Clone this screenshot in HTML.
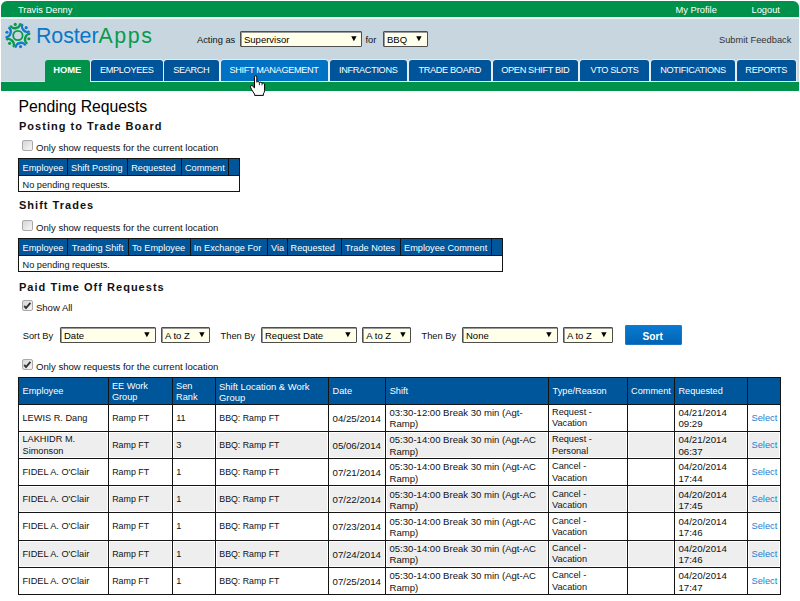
<!DOCTYPE html>
<html><head><meta charset="utf-8">
<style>
html,body{margin:0;padding:0;background:#fff;}
body{width:800px;height:601px;overflow:hidden;position:relative;font-family:"Liberation Sans",sans-serif;color:#000;}
.a{position:absolute;white-space:nowrap;}
.b{position:absolute;}
.wt{color:#fff;font-size:9.3px;}
.tab{position:absolute;top:60px;height:21px;background:#00559a;border-radius:3px 3px 0 0;box-shadow:0 0 0 1px #e6ecf2;color:#fff;font-size:9.2px;text-align:center;line-height:20.5px;letter-spacing:-0.35px;}
.tab.home{background:#00924a;height:22px;font-weight:bold;font-size:9.4px;letter-spacing:0;box-shadow:none;}
.tab.hov{background:#0072c6;}
.sel{position:absolute;height:13.7px;border:1px solid #4e4e4e;background:#ffffea;box-shadow:inset 1px 1px 0 #9a9a9a;font-size:9.5px;line-height:15.5px;border-radius:1px;}
.sel span{position:absolute;left:3px;top:0;}
.sel svg{position:absolute;top:4px;}
.h1{font-size:15.75px;}
.h2{font-size:11px;font-weight:bold;letter-spacing:1.02px;color:#111;}
.t{font-size:9.3px;}
.cb{position:absolute;width:9px;height:9px;border:1px solid #a9a9a9;border-radius:2px;background:linear-gradient(135deg,#d6d6d6,#f6f6f6);}
.th{color:#fff;font-size:9.2px;}
.td{font-size:9.2px;color:#111;}
.lnk{color:#1a7fd4;font-size:9.3px;}
</style></head><body>
<div class="b" style="left:1px;top:1px;width:798px;height:16px;background:#00924a;border-radius:6px 6px 0 0;"></div>
<div class="b" style="left:1px;top:17px;width:798px;height:2px;background:#eeeef4;"></div>
<div class="b" style="left:1px;top:19px;width:797.5px;height:62px;background:#c8d6e0;"></div>
<div class="b" style="left:1px;top:81px;width:797.5px;height:1px;background:#dcdcec;"></div>
<div class="b" style="left:1px;top:82px;width:798px;height:9px;background:#00924a;"></div>
<div class="a wt" style="left:18px;top:5px;">Travis Denny</div>
<div class="a wt" style="left:675.5px;top:5.4px;">My Profile</div>
<div class="a wt" style="left:751.5px;top:5.4px;">Logout</div>
<svg class="a" style="left:0;top:16px;" width="36" height="40" viewBox="0 16 36 40"><circle cx="17.9" cy="35.5" r="4.7" fill="none" stroke="#079a4b" stroke-width="1.8"/><circle cx="15.24" cy="24.41" r="1.6" fill="#079a4b"/><path d="M20.00 23.27A4.9 3.7 -13.5 0 1 10.47 25.56" fill="none" stroke="#079a4b" stroke-width="2.4"/><circle cx="26.17" cy="27.65" r="1.6" fill="#1479cc"/><path d="M29.54 31.21A4.9 3.7 46.5 0 1 22.80 24.10" fill="none" stroke="#1479cc" stroke-width="2.4"/><circle cx="28.83" cy="38.74" r="1.6" fill="#079a4b"/><path d="M27.44 43.44A4.9 3.7 106.5 0 1 30.22 34.04" fill="none" stroke="#079a4b" stroke-width="2.4"/><circle cx="20.56" cy="46.59" r="1.6" fill="#1479cc"/><path d="M15.80 47.73A4.9 3.7 166.5 0 1 25.33 45.44" fill="none" stroke="#1479cc" stroke-width="2.4"/><circle cx="9.63" cy="43.35" r="1.6" fill="#079a4b"/><path d="M6.26 39.79A4.9 3.7 -133.5 0 1 13.00 46.90" fill="none" stroke="#079a4b" stroke-width="2.4"/><circle cx="6.97" cy="32.26" r="1.6" fill="#1479cc"/><path d="M8.36 27.56A4.9 3.7 -73.5 0 1 5.58 36.96" fill="none" stroke="#1479cc" stroke-width="2.4"/></svg>
<div class="a a" style="left:36px;top:24px;font-size:21.4px;color:#0b77c9;letter-spacing:-0.1px;">Roster<span style="color:#079a4e;letter-spacing:1.6px">Apps</span></div>
<div class="a t" style="left:197px;top:35px;color:#111;">Acting as</div>
<div class="sel" style="left:240px;top:31px;width:120px;"><span>Supervisor</span><svg width="6" height="6" viewBox="0 0 6 6" style="left:109.5px"><path d="M0.2 0.3H5.6L2.9 5.2Z" fill="#000"/></svg></div>
<div class="a t" style="left:365.5px;top:35px;color:#111;">for</div>
<div class="sel" style="left:383px;top:31px;width:43px;"><span>BBQ</span><svg width="6" height="6" viewBox="0 0 6 6" style="left:32.3px"><path d="M0.2 0.3H5.6L2.9 5.2Z" fill="#000"/></svg></div>
<div class="a t" style="left:719px;top:34.5px;color:#333;">Submit Feedback</div>
<div class="tab home" style="left:45px;width:44.5px;">HOME</div>
<div class="tab " style="left:91px;width:71.5px;">EMPLOYEES</div>
<div class="tab " style="left:164px;width:54.5px;">SEARCH</div>
<div class="tab hov" style="left:220.5px;width:107.0px;">SHIFT MANAGEMENT</div>
<div class="tab " style="left:330px;width:76.5px;">INFRACTIONS</div>
<div class="tab " style="left:408.5px;width:82.5px;">TRADE BOARD</div>
<div class="tab " style="left:493px;width:84.5px;">OPEN SHIFT BID</div>
<div class="tab " style="left:580px;width:69px;">VTO SLOTS</div>
<div class="tab " style="left:651px;width:84px;">NOTIFICATIONS</div>
<div class="tab " style="left:737px;width:58.5px;">REPORTS</div>
<div class="a h1" style="left:18.5px;top:97.5px;">Pending Requests</div>
<div class="a h2" style="left:19px;top:119.7px;">Posting to Trade Board</div>
<div class="cb" style="left:22px;top:140px;"></div>
<div class="a t" style="left:36px;top:142px;font-size:9.6px;color:#111;">Only show requests for the current location</div>
<div class="b" style="left:18.5px;top:158.5px;width:221.0px;height:17.0px;background:#00569a;"></div>
<div class="b" style="left:18.5px;top:191.5px;width:221.0px;height:0.0px;background:#141414;"></div>
<div class="b" style="left:18.0px;top:158.0px;width:220.0px;height:32.0px;border:1px solid #141414;"></div>
<div class="b" style="left:18.5px;top:175.0px;width:221.0px;height:1.0px;background:#141414;"></div>
<div class="b" style="left:67.1px;top:158.5px;width:1.0px;height:17.0px;background:#141414;"></div>
<div class="b" style="left:127.0px;top:158.5px;width:1.0px;height:17.0px;background:#141414;"></div>
<div class="b" style="left:181.4px;top:158.5px;width:1.0px;height:17.0px;background:#141414;"></div>
<div class="b" style="left:228.3px;top:158.5px;width:1.0px;height:17.0px;background:#141414;"></div>
<div class="a th" style="left:22.5px;top:163.1px;">Employee</div>
<div class="a th" style="left:71.1px;top:163.1px;">Shift Posting</div>
<div class="a th" style="left:131.2px;top:163.1px;">Requested</div>
<div class="a th" style="left:184.9px;top:163.1px;">Comment</div>
<div class="a td" style="left:22.5px;top:180.1px;">No pending requests.</div>
<div class="a h2" style="left:19px;top:199.3px;">Shift Trades</div>
<div class="cb" style="left:22px;top:220px;"></div>
<div class="a t" style="left:36px;top:222px;font-size:9.6px;color:#111;">Only show requests for the current location</div>
<div class="b" style="left:18.5px;top:238.5px;width:483.5px;height:17.0px;background:#00569a;"></div>
<div class="b" style="left:18.5px;top:271.5px;width:483.5px;height:0.0px;background:#141414;"></div>
<div class="b" style="left:18.0px;top:238.0px;width:482.5px;height:32.0px;border:1px solid #141414;"></div>
<div class="b" style="left:18.5px;top:255.0px;width:483.5px;height:1.0px;background:#141414;"></div>
<div class="b" style="left:66.5px;top:238.5px;width:1.0px;height:17.0px;background:#141414;"></div>
<div class="b" style="left:127.69999999999999px;top:238.5px;width:1.0px;height:17.0px;background:#141414;"></div>
<div class="b" style="left:189.7px;top:238.5px;width:1.0px;height:17.0px;background:#141414;"></div>
<div class="b" style="left:267.0px;top:238.5px;width:1.0px;height:17.0px;background:#141414;"></div>
<div class="b" style="left:286.8px;top:238.5px;width:1.0px;height:17.0px;background:#141414;"></div>
<div class="b" style="left:340.9px;top:238.5px;width:1.0px;height:17.0px;background:#141414;"></div>
<div class="b" style="left:400.1px;top:238.5px;width:1.0px;height:17.0px;background:#141414;"></div>
<div class="b" style="left:490.8px;top:238.5px;width:1.0px;height:17.0px;background:#141414;"></div>
<div class="a th" style="left:22.5px;top:243.1px;">Employee</div>
<div class="a th" style="left:71.7px;top:243.1px;">Trading Shift</div>
<div class="a th" style="left:132px;top:243.1px;">To Employee</div>
<div class="a th" style="left:193.8px;top:243.1px;">In Exchange For</div>
<div class="a th" style="left:271px;top:243.1px;">Via</div>
<div class="a th" style="left:290.5px;top:243.1px;">Requested</div>
<div class="a th" style="left:345px;top:243.1px;">Trade Notes</div>
<div class="a th" style="left:404px;top:243.1px;">Employee Comment</div>
<div class="a td" style="left:22.5px;top:260.1px;">No pending requests.</div>
<div class="a h2" style="left:19px;top:280.5px;">Paid Time Off Requests</div>
<div class="cb" style="left:22px;top:300px;"><svg class="a" style="left:-1px;top:-1px" width="11" height="11" viewBox="0 0 11 11"><path d="M2.2 5.9L4 8L8.4 2.8" fill="none" stroke="#333" stroke-width="1.9"/></svg></div>
<div class="a t" style="left:36px;top:302px;font-size:9.5px;color:#111;">Show All</div>
<div class="a t" style="left:22.7px;top:330.5px;color:#111;">Sort By</div>
<div class="sel" style="left:60px;top:327px;width:93.5px;height:13.5px;line-height:15.5px;font-size:9.5px;"><span>Date</span><svg width="6" height="6" viewBox="0 0 6 6" style="left:83.1px"><path d="M0.2 0.3H5.6L2.9 5.2Z" fill="#000"/></svg></div>
<div class="sel" style="left:161px;top:327px;width:47px;height:13.5px;line-height:15.5px;font-size:9.5px;"><span>A to Z</span><svg width="6" height="6" viewBox="0 0 6 6" style="left:36.6px"><path d="M0.2 0.3H5.6L2.9 5.2Z" fill="#000"/></svg></div>
<div class="a t" style="left:220.6px;top:330.5px;color:#111;">Then By</div>
<div class="sel" style="left:261px;top:327px;width:93.5px;height:13.5px;line-height:15.5px;font-size:9.5px;"><span>Request Date</span><svg width="6" height="6" viewBox="0 0 6 6" style="left:83.1px"><path d="M0.2 0.3H5.6L2.9 5.2Z" fill="#000"/></svg></div>
<div class="sel" style="left:362.3px;top:327px;width:46.69999999999999px;height:13.5px;line-height:15.5px;font-size:9.5px;"><span>A to Z</span><svg width="6" height="6" viewBox="0 0 6 6" style="left:36.29999999999999px"><path d="M0.2 0.3H5.6L2.9 5.2Z" fill="#000"/></svg></div>
<div class="a t" style="left:421.5px;top:330.5px;color:#111;">Then By</div>
<div class="sel" style="left:462px;top:327px;width:93.5px;height:13.5px;line-height:15.5px;font-size:9.5px;"><span>None</span><svg width="6" height="6" viewBox="0 0 6 6" style="left:83.1px"><path d="M0.2 0.3H5.6L2.9 5.2Z" fill="#000"/></svg></div>
<div class="sel" style="left:563px;top:327px;width:47.5px;height:13.5px;line-height:15.5px;font-size:9.5px;"><span>A to Z</span><svg width="6" height="6" viewBox="0 0 6 6" style="left:37.1px"><path d="M0.2 0.3H5.6L2.9 5.2Z" fill="#000"/></svg></div>
<div class="b" style="left:624.5px;top:325px;width:57.5px;height:19.8px;border-radius:2px;background:linear-gradient(#0a7bd2,#0063b4);box-shadow:inset 0 0 0 1px #1b78c8;"></div>
<div class="a a" style="left:642.5px;top:330.5px;color:#fff;font-weight:bold;font-size:10.2px;">Sort</div>
<div class="cb" style="left:22px;top:359px;"><svg class="a" style="left:-1px;top:-1px" width="11" height="11" viewBox="0 0 11 11"><path d="M2.2 5.9L4 8L8.4 2.8" fill="none" stroke="#333" stroke-width="1.9"/></svg></div>
<div class="a t" style="left:36px;top:361px;font-size:9.6px;color:#111;">Only show requests for the current location</div>
<div class="b" style="left:18.5px;top:377px;width:762.25px;height:27px;background:#00569a;"></div>
<div class="b" style="left:20.0px;top:432.71px;width:86.9px;height:24.22px;background:#eeeeee;"></div>
<div class="b" style="left:109.9px;top:432.71px;width:61.0px;height:24.22px;background:#eeeeee;"></div>
<div class="b" style="left:173.9px;top:432.71px;width:40.1px;height:24.22px;background:#eeeeee;"></div>
<div class="b" style="left:217.0px;top:432.71px;width:110.1px;height:24.22px;background:#eeeeee;"></div>
<div class="b" style="left:330.1px;top:432.71px;width:54.2px;height:24.22px;background:#eeeeee;"></div>
<div class="b" style="left:387.3px;top:432.71px;width:159.6px;height:24.22px;background:#eeeeee;"></div>
<div class="b" style="left:549.9px;top:432.71px;width:76.1px;height:24.22px;background:#eeeeee;"></div>
<div class="b" style="left:629.0px;top:432.71px;width:44.4px;height:24.22px;background:#eeeeee;"></div>
<div class="b" style="left:676.4px;top:432.71px;width:69.6px;height:24.22px;background:#eeeeee;"></div>
<div class="b" style="left:749.0px;top:432.71px;width:30.25px;height:24.22px;background:#eeeeee;"></div>
<div class="b" style="left:20.0px;top:487.14px;width:86.9px;height:24.22px;background:#eeeeee;"></div>
<div class="b" style="left:109.9px;top:487.14px;width:61.0px;height:24.22px;background:#eeeeee;"></div>
<div class="b" style="left:173.9px;top:487.14px;width:40.1px;height:24.22px;background:#eeeeee;"></div>
<div class="b" style="left:217.0px;top:487.14px;width:110.1px;height:24.22px;background:#eeeeee;"></div>
<div class="b" style="left:330.1px;top:487.14px;width:54.2px;height:24.22px;background:#eeeeee;"></div>
<div class="b" style="left:387.3px;top:487.14px;width:159.6px;height:24.22px;background:#eeeeee;"></div>
<div class="b" style="left:549.9px;top:487.14px;width:76.1px;height:24.22px;background:#eeeeee;"></div>
<div class="b" style="left:629.0px;top:487.14px;width:44.4px;height:24.22px;background:#eeeeee;"></div>
<div class="b" style="left:676.4px;top:487.14px;width:69.6px;height:24.22px;background:#eeeeee;"></div>
<div class="b" style="left:749.0px;top:487.14px;width:30.25px;height:24.22px;background:#eeeeee;"></div>
<div class="b" style="left:20.0px;top:541.57px;width:86.9px;height:24.22px;background:#eeeeee;"></div>
<div class="b" style="left:109.9px;top:541.57px;width:61.0px;height:24.22px;background:#eeeeee;"></div>
<div class="b" style="left:173.9px;top:541.57px;width:40.1px;height:24.22px;background:#eeeeee;"></div>
<div class="b" style="left:217.0px;top:541.57px;width:110.1px;height:24.22px;background:#eeeeee;"></div>
<div class="b" style="left:330.1px;top:541.57px;width:54.2px;height:24.22px;background:#eeeeee;"></div>
<div class="b" style="left:387.3px;top:541.57px;width:159.6px;height:24.22px;background:#eeeeee;"></div>
<div class="b" style="left:549.9px;top:541.57px;width:76.1px;height:24.22px;background:#eeeeee;"></div>
<div class="b" style="left:629.0px;top:541.57px;width:44.4px;height:24.22px;background:#eeeeee;"></div>
<div class="b" style="left:676.4px;top:541.57px;width:69.6px;height:24.22px;background:#eeeeee;"></div>
<div class="b" style="left:749.0px;top:541.57px;width:30.25px;height:24.22px;background:#eeeeee;"></div>
<div class="b" style="left:18.0px;top:376.5px;width:761.25px;height:216.5px;border:1px solid #141414;"></div>
<div class="b" style="left:107.9px;top:377px;width:1.0px;height:217.5px;background:#141414;"></div>
<div class="b" style="left:171.9px;top:377px;width:1.0px;height:217.5px;background:#141414;"></div>
<div class="b" style="left:215.0px;top:377px;width:1.0px;height:217.5px;background:#141414;"></div>
<div class="b" style="left:328.1px;top:377px;width:1.0px;height:217.5px;background:#141414;"></div>
<div class="b" style="left:385.3px;top:377px;width:1.0px;height:217.5px;background:#141414;"></div>
<div class="b" style="left:547.9px;top:377px;width:1.0px;height:217.5px;background:#141414;"></div>
<div class="b" style="left:627.0px;top:377px;width:1.0px;height:217.5px;background:#141414;"></div>
<div class="b" style="left:674.4px;top:377px;width:1.0px;height:217.5px;background:#141414;"></div>
<div class="b" style="left:747.0px;top:377px;width:1.0px;height:217.5px;background:#141414;"></div>
<div class="b" style="left:18.5px;top:403.5px;width:762.25px;height:1.0px;background:#141414;"></div>
<div class="b" style="left:18.5px;top:430.71px;width:762.25px;height:1.0px;background:#141414;"></div>
<div class="b" style="left:18.5px;top:457.93px;width:762.25px;height:1.0px;background:#141414;"></div>
<div class="b" style="left:18.5px;top:485.14px;width:762.25px;height:1.0px;background:#141414;"></div>
<div class="b" style="left:18.5px;top:512.36px;width:762.25px;height:1.0px;background:#141414;"></div>
<div class="b" style="left:18.5px;top:539.57px;width:762.25px;height:1.0px;background:#141414;"></div>
<div class="b" style="left:18.5px;top:566.79px;width:762.25px;height:1.0px;background:#141414;"></div>
<div class="b" style="left:18.5px;top:594.0px;width:762.25px;height:1.0px;background:#141414;"></div>
<div class="a th" style="left:22.5px;top:386.3px;">Employee</div>
<div class="a th" style="left:111.9px;top:381.0px;">EE Work</div>
<div class="a th" style="left:111.9px;top:391.9px;">Group</div>
<div class="a th" style="left:176.1px;top:381.0px;">Sen</div>
<div class="a th" style="left:176.1px;top:391.9px;">Rank</div>
<div class="a th" style="left:219px;top:381.0px;font-size:9.45px;">Shift Location &amp; Work</div>
<div class="a th" style="left:219px;top:391.9px;font-size:9.45px;">Group</div>
<div class="a th" style="left:332.6px;top:386.3px;">Date</div>
<div class="a th" style="left:389.7px;top:386.3px;">Shift</div>
<div class="a th" style="left:552.6px;top:386.3px;">Type/Reason</div>
<div class="a th" style="left:631px;top:386.3px;">Comment</div>
<div class="a th" style="left:678.4px;top:386.3px;">Requested</div>
<div class="a td" style="left:22.5px;top:412.59999999999997px;">LEWIS R. Dang</div>
<div class="a td" style="left:112.2px;top:412.59999999999997px;font-size:8.9px;">Ramp FT</div>
<div class="a td" style="left:176.2px;top:412.59999999999997px;">11</div>
<div class="a td" style="left:219.3px;top:412.59999999999997px;font-size:8.8px;">BBQ: Ramp FT</div>
<div class="a td" style="left:332.5px;top:412.59999999999997px;font-size:9.7px;">04/25/2014</div>
<div class="a td" style="left:389.5px;top:406.9px;font-size:9.55px;">03:30-12:00 Break 30 min (Agt-</div>
<div class="a td" style="left:389.5px;top:418.4px;font-size:9.55px;">Ramp)</div>
<div class="a td" style="left:552px;top:406.9px;">Request -</div>
<div class="a td" style="left:552px;top:418.4px;">Vacation</div>
<div class="a td" style="left:678.4px;top:406.9px;font-size:9.7px;">04/21/2014</div>
<div class="a td" style="left:678.4px;top:418.4px;font-size:9.7px;">09:29</div>
<div class="a lnk" style="left:751.5px;top:412.59999999999997px;">Select</div>
<div class="a td" style="left:22.5px;top:434.1142857142857px;">LAKHIDR M.</div>
<div class="a td" style="left:22.5px;top:445.6142857142857px;">Simonson</div>
<div class="a td" style="left:112.2px;top:439.8142857142857px;font-size:8.9px;">Ramp FT</div>
<div class="a td" style="left:176.2px;top:439.8142857142857px;">3</div>
<div class="a td" style="left:219.3px;top:439.8142857142857px;font-size:8.8px;">BBQ: Ramp FT</div>
<div class="a td" style="left:332.5px;top:439.8142857142857px;font-size:9.7px;">05/06/2014</div>
<div class="a td" style="left:389.5px;top:434.1142857142857px;font-size:9.55px;">05:30-14:00 Break 30 min (Agt-AC</div>
<div class="a td" style="left:389.5px;top:445.6142857142857px;font-size:9.55px;">Ramp)</div>
<div class="a td" style="left:552px;top:434.1142857142857px;">Request -</div>
<div class="a td" style="left:552px;top:445.6142857142857px;">Personal</div>
<div class="a td" style="left:678.4px;top:434.1142857142857px;font-size:9.7px;">04/21/2014</div>
<div class="a td" style="left:678.4px;top:445.6142857142857px;font-size:9.7px;">06:37</div>
<div class="a lnk" style="left:751.5px;top:439.8142857142857px;">Select</div>
<div class="a td" style="left:22.5px;top:467.0285714285714px;">FIDEL A. O'Clair</div>
<div class="a td" style="left:112.2px;top:467.0285714285714px;font-size:8.9px;">Ramp FT</div>
<div class="a td" style="left:176.2px;top:467.0285714285714px;">1</div>
<div class="a td" style="left:219.3px;top:467.0285714285714px;font-size:8.8px;">BBQ: Ramp FT</div>
<div class="a td" style="left:332.5px;top:467.0285714285714px;font-size:9.7px;">07/21/2014</div>
<div class="a td" style="left:389.5px;top:461.3285714285714px;font-size:9.55px;">05:30-14:00 Break 30 min (Agt-AC</div>
<div class="a td" style="left:389.5px;top:472.8285714285714px;font-size:9.55px;">Ramp)</div>
<div class="a td" style="left:552px;top:461.3285714285714px;">Cancel -</div>
<div class="a td" style="left:552px;top:472.8285714285714px;">Vacation</div>
<div class="a td" style="left:678.4px;top:461.3285714285714px;font-size:9.7px;">04/20/2014</div>
<div class="a td" style="left:678.4px;top:472.8285714285714px;font-size:9.7px;">17:44</div>
<div class="a lnk" style="left:751.5px;top:467.0285714285714px;">Select</div>
<div class="a td" style="left:22.5px;top:494.2428571428571px;">FIDEL A. O'Clair</div>
<div class="a td" style="left:112.2px;top:494.2428571428571px;font-size:8.9px;">Ramp FT</div>
<div class="a td" style="left:176.2px;top:494.2428571428571px;">1</div>
<div class="a td" style="left:219.3px;top:494.2428571428571px;font-size:8.8px;">BBQ: Ramp FT</div>
<div class="a td" style="left:332.5px;top:494.2428571428571px;font-size:9.7px;">07/22/2014</div>
<div class="a td" style="left:389.5px;top:488.5428571428571px;font-size:9.55px;">05:30-14:00 Break 30 min (Agt-AC</div>
<div class="a td" style="left:389.5px;top:500.0428571428571px;font-size:9.55px;">Ramp)</div>
<div class="a td" style="left:552px;top:488.5428571428571px;">Cancel -</div>
<div class="a td" style="left:552px;top:500.0428571428571px;">Vacation</div>
<div class="a td" style="left:678.4px;top:488.5428571428571px;font-size:9.7px;">04/20/2014</div>
<div class="a td" style="left:678.4px;top:500.0428571428571px;font-size:9.7px;">17:45</div>
<div class="a lnk" style="left:751.5px;top:494.2428571428571px;">Select</div>
<div class="a td" style="left:22.5px;top:521.4571428571429px;">FIDEL A. O'Clair</div>
<div class="a td" style="left:112.2px;top:521.4571428571429px;font-size:8.9px;">Ramp FT</div>
<div class="a td" style="left:176.2px;top:521.4571428571429px;">1</div>
<div class="a td" style="left:219.3px;top:521.4571428571429px;font-size:8.8px;">BBQ: Ramp FT</div>
<div class="a td" style="left:332.5px;top:521.4571428571429px;font-size:9.7px;">07/23/2014</div>
<div class="a td" style="left:389.5px;top:515.7571428571429px;font-size:9.55px;">05:30-14:00 Break 30 min (Agt-AC</div>
<div class="a td" style="left:389.5px;top:527.2571428571429px;font-size:9.55px;">Ramp)</div>
<div class="a td" style="left:552px;top:515.7571428571429px;">Cancel -</div>
<div class="a td" style="left:552px;top:527.2571428571429px;">Vacation</div>
<div class="a td" style="left:678.4px;top:515.7571428571429px;font-size:9.7px;">04/20/2014</div>
<div class="a td" style="left:678.4px;top:527.2571428571429px;font-size:9.7px;">17:46</div>
<div class="a lnk" style="left:751.5px;top:521.4571428571429px;">Select</div>
<div class="a td" style="left:22.5px;top:548.6714285714286px;">FIDEL A. O'Clair</div>
<div class="a td" style="left:112.2px;top:548.6714285714286px;font-size:8.9px;">Ramp FT</div>
<div class="a td" style="left:176.2px;top:548.6714285714286px;">1</div>
<div class="a td" style="left:219.3px;top:548.6714285714286px;font-size:8.8px;">BBQ: Ramp FT</div>
<div class="a td" style="left:332.5px;top:548.6714285714286px;font-size:9.7px;">07/24/2014</div>
<div class="a td" style="left:389.5px;top:542.9714285714285px;font-size:9.55px;">05:30-14:00 Break 30 min (Agt-AC</div>
<div class="a td" style="left:389.5px;top:554.4714285714285px;font-size:9.55px;">Ramp)</div>
<div class="a td" style="left:552px;top:542.9714285714285px;">Cancel -</div>
<div class="a td" style="left:552px;top:554.4714285714285px;">Vacation</div>
<div class="a td" style="left:678.4px;top:542.9714285714285px;font-size:9.7px;">04/20/2014</div>
<div class="a td" style="left:678.4px;top:554.4714285714285px;font-size:9.7px;">17:46</div>
<div class="a lnk" style="left:751.5px;top:548.6714285714286px;">Select</div>
<div class="a td" style="left:22.5px;top:575.8857142857142px;">FIDEL A. O'Clair</div>
<div class="a td" style="left:112.2px;top:575.8857142857142px;font-size:8.9px;">Ramp FT</div>
<div class="a td" style="left:176.2px;top:575.8857142857142px;">1</div>
<div class="a td" style="left:219.3px;top:575.8857142857142px;font-size:8.8px;">BBQ: Ramp FT</div>
<div class="a td" style="left:332.5px;top:575.8857142857142px;font-size:9.7px;">07/25/2014</div>
<div class="a td" style="left:389.5px;top:570.1857142857142px;font-size:9.55px;">05:30-14:00 Break 30 min (Agt-AC</div>
<div class="a td" style="left:389.5px;top:581.6857142857142px;font-size:9.55px;">Ramp)</div>
<div class="a td" style="left:552px;top:570.1857142857142px;">Cancel -</div>
<div class="a td" style="left:552px;top:581.6857142857142px;">Vacation</div>
<div class="a td" style="left:678.4px;top:570.1857142857142px;font-size:9.7px;">04/20/2014</div>
<div class="a td" style="left:678.4px;top:581.6857142857142px;font-size:9.7px;">17:47</div>
<div class="a lnk" style="left:751.5px;top:575.8857142857142px;">Select</div>
<svg class="a" style="left:248px;top:74px;" width="20" height="24" viewBox="248 74 20 24"><path d="M254.5 77.2Q254.5 75.7 255.65 75.7Q256.8 75.7 256.8 77.2L256.8 82.2Q257.2 81.5 258.1 81.5Q259.3 81.6 259.4 82.7Q259.8 82.1 260.8 82.2Q261.9 82.4 262 83.4Q262.5 82.9 263.4 83.1Q264.6 83.5 264.6 85L264.6 90.6Q264.4 92.5 263.4 93.8L263.4 95.4L254.6 95.4L254.6 94.1Q253 92 251.5 89.3Q250.2 87.1 250.6 86.1Q251.2 84.9 252.6 86L254.5 87.9Z" fill="#fff" stroke="#000" stroke-width="1" stroke-linejoin="round"/><path d="M259.4 82.8V85.2M262 83.5V85.4" stroke="#000" stroke-width="0.8"/></svg>
</body></html>
